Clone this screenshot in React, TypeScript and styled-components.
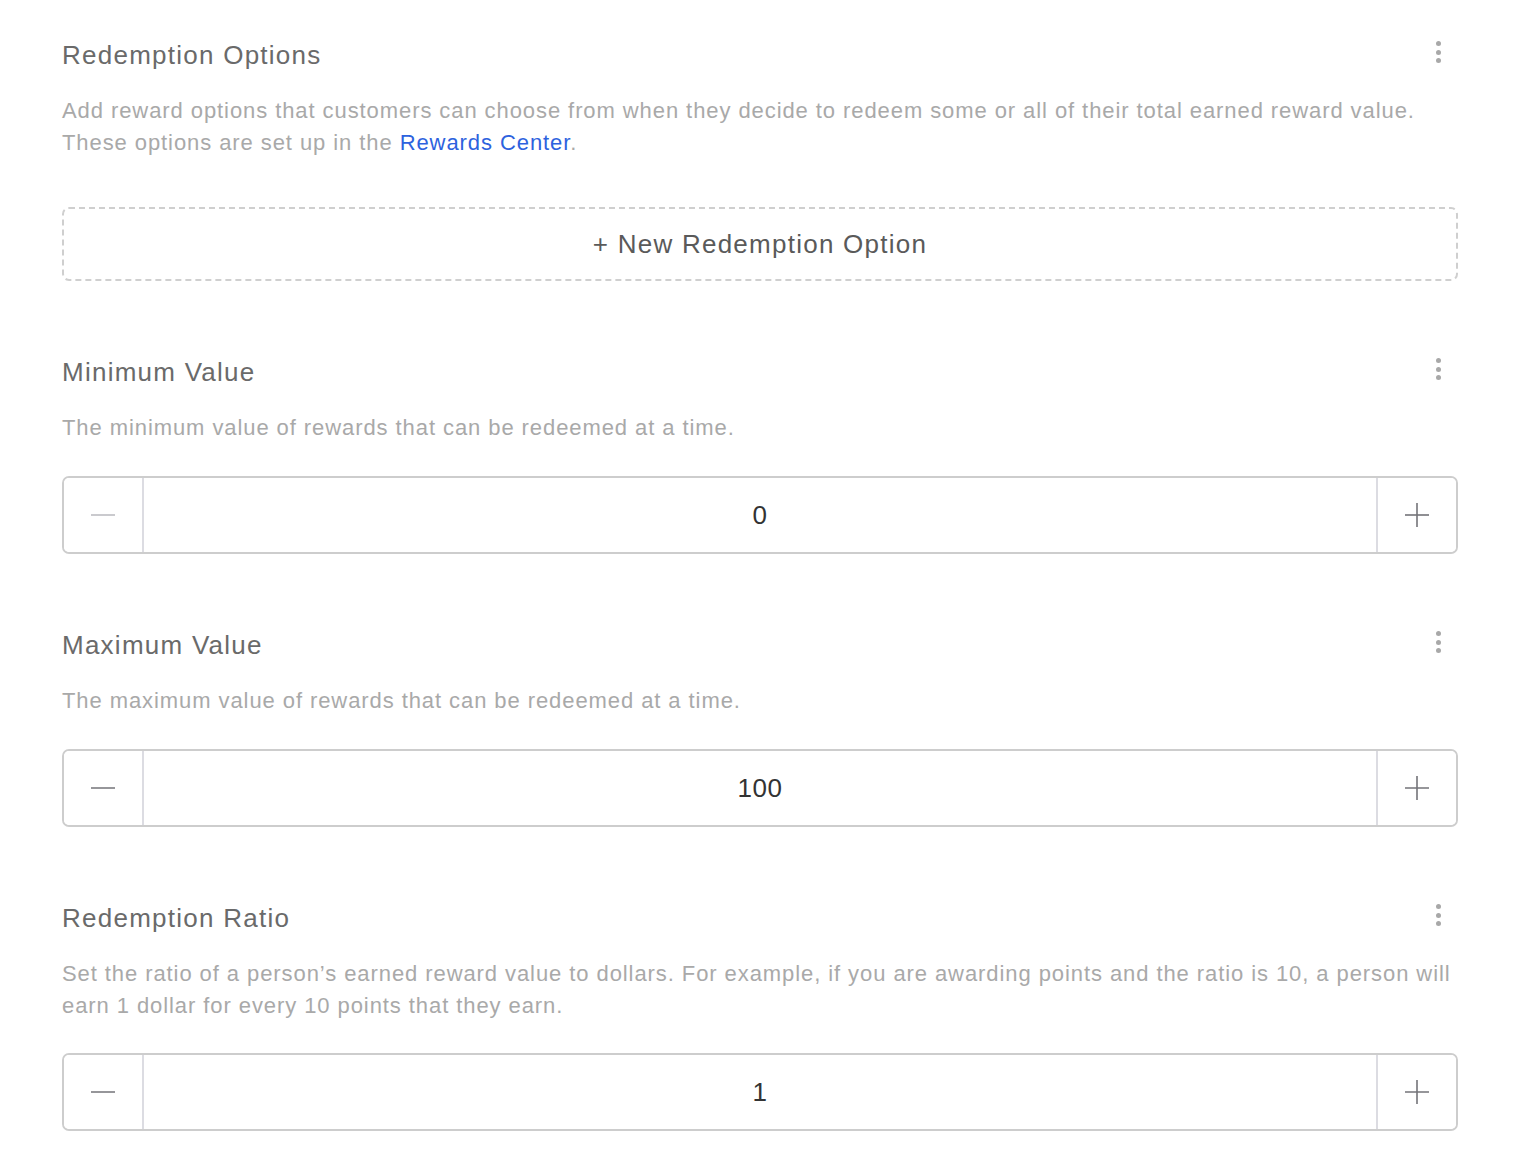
import React, { useState } from "react";
import styled, { createGlobalStyle } from "styled-components";

const Global = createGlobalStyle`
  html, body { margin: 0; padding: 0; background: #fff; }
  body { font-family: "Liberation Sans", Arial, Helvetica, sans-serif; }
  * { box-sizing: border-box; }
`;

const Page = styled.div`
  padding: 39px 74px 30px 62px;
  display: flex;
  flex-direction: column;
`;

const Section = styled.section<{ $gapAfter?: number }>`
  display: flex;
  flex-direction: column;
  margin-bottom: ${(p) => p.$gapAfter ?? 75}px;
`;

const Header = styled.div`
  display: flex;
  align-items: center;
  justify-content: space-between;
  height: 32px;
`;

const Title = styled.h2`
  margin: 0;
  font-size: 26px;
  line-height: 32px;
  font-weight: 400;
  letter-spacing: 1.25px;
  color: #6a6a6a;
`;

const Kebab = styled.button`
  width: 20px;
  height: 32px;
  margin-right: 10px;
  margin-top: -6px;
  border: 0;
  background: none;
  padding: 0;
  display: flex;
  flex-direction: column;
  align-items: center;
  justify-content: center;
  gap: 3.5px;
  cursor: pointer;
  span {
    width: 5px;
    height: 5px;
    border-radius: 50%;
    background: #a8a8a8;
  }
`;

const Desc = styled.p<{ $after: number }>`
  margin: 24px 0 ${(p) => p.$after}px;
  font-size: 22px;
  line-height: 32px;
  letter-spacing: 0.92px;
  color: #a9a9a9;
`;

const Link = styled.a`
  color: #2d62de;
  text-decoration: none;
`;

const DashedButton = styled.button`
  height: 74px;
  width: 100%;
  border: 2px dashed #cfcfcf;
  border-radius: 7px;
  background: #fff;
  font-family: inherit;
  font-size: 26px;
  letter-spacing: 1.25px;
  color: #5a5a5a;
  cursor: pointer;
`;

const Stepper = styled.div`
  display: grid;
  grid-template-columns: 80px 1fr 80px;
  height: 78px;
  border: 2px solid #cdcdcd;
  border-radius: 7px;
  overflow: hidden;
`;

const StepBtn = styled.button<{ $side: "left" | "right"; $disabled?: boolean }>`
  border: 0;
  ${(p) => (p.$side === "left" ? "border-right" : "border-left")}: 2px solid #dcdce2;
  background: #fff;
  display: flex;
  align-items: center;
  justify-content: center;
  padding: 0;
  cursor: ${(p) => (p.$disabled ? "default" : "pointer")};
  color: ${(p) => (p.$disabled ? "#bdbdc2" : "#737378")};
`;

const Value = styled.div`
  display: flex;
  align-items: center;
  justify-content: center;
  font-size: 26px;
  letter-spacing: 0.6px;
  color: #333;
`;

const Minus = () => (
  <svg width="24" height="24" viewBox="0 0 24 24">
    <line x1="0" y1="12" x2="24" y2="12" stroke="currentColor" strokeWidth="1.6" />
  </svg>
);

const Plus = () => (
  <svg width="24" height="24" viewBox="0 0 24 24">
    <line x1="0" y1="12" x2="24" y2="12" stroke="currentColor" strokeWidth="1.6" />
    <line x1="12" y1="0" x2="12" y2="24" stroke="currentColor" strokeWidth="1.6" />
  </svg>
);

const More = () => (
  <Kebab aria-label="More">
    <span />
    <span />
    <span />
  </Kebab>
);

const NumberStepper: React.FC<{ initial: number; min?: number }> = ({ initial, min = 0 }) => {
  const [v, setV] = useState(initial);
  const atMin = v <= min;
  return (
    <Stepper>
      <StepBtn $side="left" $disabled={atMin} onClick={() => !atMin && setV(v - 1)}>
        <Minus />
      </StepBtn>
      <Value>{v}</Value>
      <StepBtn $side="right" onClick={() => setV(v + 1)}>
        <Plus />
      </StepBtn>
    </Stepper>
  );
};

export default function App() {
  return (
    <>
      <Global />
      <Page>
        <Section>
          <Header>
            <Title>Redemption Options</Title>
            <More />
          </Header>
          <Desc $after={48}>
            Add reward options that customers can choose from when they decide to redeem some or all of their total earned reward value.
            <br />
            These options are set up in the <Link href="#">Rewards Center</Link>.
          </Desc>
          <DashedButton>+ New Redemption Option</DashedButton>
        </Section>

        <Section>
          <Header>
            <Title>Minimum Value</Title>
            <More />
          </Header>
          <Desc $after={32}>The minimum value of rewards that can be redeemed at a time.</Desc>
          <NumberStepper initial={0} />
        </Section>

        <Section>
          <Header>
            <Title>Maximum Value</Title>
            <More />
          </Header>
          <Desc $after={32}>The maximum value of rewards that can be redeemed at a time.</Desc>
          <NumberStepper initial={100} />
        </Section>

        <Section $gapAfter={0}>
          <Header>
            <Title>Redemption Ratio</Title>
            <More />
          </Header>
          <Desc $after={31}>
            Set the ratio of a person’s earned reward value to dollars. For example, if you are awarding points and the ratio is 10, a person will earn 1 dollar for every 10 points that they earn.
          </Desc>
          <NumberStepper initial={1} />
        </Section>
      </Page>
    </>
  );
}
